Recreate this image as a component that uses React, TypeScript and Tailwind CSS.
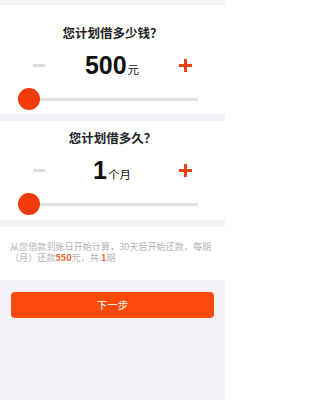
const font = { fontFamily: '"Noto Sans CJK SC", "Noto Sans", sans-serif' };

function Slider() {
  return (
    <div className="relative h-[22px] ml-[18px] mr-[27px]">
      <div className="absolute left-0 right-0 top-[10px] h-[3px] bg-[#e2e2e2]" />
      <div className="absolute left-0 top-0 w-[22px] h-[22px] rounded-full bg-[#f23c0c]" />
    </div>
  );
}

function AmountRow({ value, unit }: { value: string; unit: string }) {
  return (
    <div className="flex items-center justify-between px-[33px] h-[28px]">
      <div className="w-[12px] h-[3px] bg-[#dcdcdc]" />
      <div className="flex items-baseline text-[#111]">
        <span className="text-[25px] font-bold leading-none" style={{ fontFamily: '"Liberation Sans", Arial, sans-serif' }}>
          {value}
        </span>
        <span className="text-[11.5px] leading-none ml-[1px]">{unit}</span>
      </div>
      <div className="relative w-[13px] h-[13px]">
        <div className="absolute left-0 top-[5px] w-[13px] h-[3px] bg-[#f2400e]" />
        <div className="absolute left-[5px] top-0 w-[3px] h-[13px] bg-[#f2400e]" />
      </div>
    </div>
  );
}

export default function App() {
  return (
    <div className="w-[225px] min-h-[400px] bg-[#f4f4f8] pt-[5px]" style={font}>
      <div className="bg-white h-[109px] pt-[20px]">
        <div className="text-center text-[12.5px] leading-[16px] font-bold text-[#222]">您计划借多少钱？</div>
        <div className="mt-[10px]">
          <AmountRow value="500" unit="元" />
        </div>
        <div className="mt-[9px]">
          <Slider />
        </div>
      </div>

      <div className="bg-white h-[99px] pt-[9px] mt-[7px]">
        <div className="text-center text-[12.5px] leading-[16px] font-bold text-[#222]">您计划借多久？</div>
        <div className="mt-[10px]">
          <AmountRow value="1" unit="个月" />
        </div>
        <div className="mt-[9px]">
          <Slider />
        </div>
      </div>

      <div className="bg-white h-[53px] mt-[7px] pl-[10px] pr-[9px] pt-[14px] text-[9.1px] leading-[11px] text-[#b3b3b3]">
        从您借款到账日开始计算，30天后开始还款，每期（月）还款<span className="text-[#f5652b] font-bold">550</span>元，共 <span className="text-[#f5652b] font-bold">1</span>期
      </div>

      <div className="mx-[11px] mt-[12px] h-[26px] rounded-[4px] bg-[#fb4a0b] flex items-center justify-center text-white text-[10.5px]">
        下一步
      </div>
    </div>
  );
}
